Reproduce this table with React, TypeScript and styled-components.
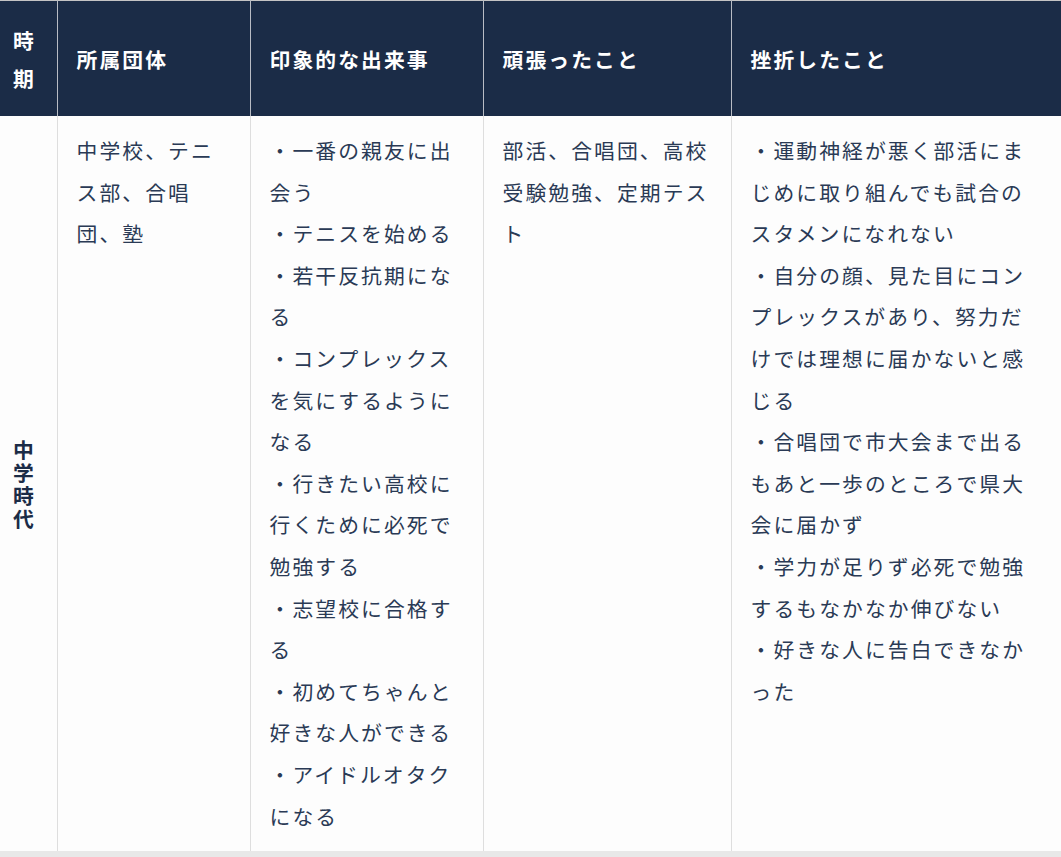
import styled, { createGlobalStyle } from "styled-components";

const GlobalStyle = createGlobalStyle`
  html, body {
    margin: 0;
    padding: 0;
    background: #e8e8e8;
  }
  body {
    font-family: "Noto Sans CJK JP", "Noto Sans", sans-serif;
  }
`;

const Table = styled.table`
  width: 1061px;
  table-layout: fixed;
  border-collapse: collapse;
  background: #fdfdfd;
  border-top: 1px solid #c4c4c4;
  font-size: 20.8px;
  letter-spacing: 2.08px;
  color: #2a3a55;
`;

const HeadCell = styled.th<{ $narrow?: boolean }>`
  background: #1b2c47;
  color: #ffffff;
  font-weight: 700;
  text-align: left;
  vertical-align: middle;
  line-height: 38px;
  padding: ${(p) => (p.$narrow ? "20px 12px 19px 13px" : "20px 19px 19px 19px")};
  border-right: 1px solid #b8bcc4;

  &:last-child {
    border-right: none;
  }
`;

const Cell = styled.td`
  vertical-align: top;
  line-height: 41.6px;
  padding: 14px 19px 14px 19px;
  border-right: 1px solid #dedede;
  word-break: normal;
  line-break: strict;

  &:last-child {
    border-right: none;
  }
`;

const PeriodCell = styled.td`
  vertical-align: middle;
  font-weight: 700;
  color: #1b2c47;
  line-height: 23px;
  padding: 14px 12px 14px 13px;
  border-right: 1px solid #dedede;
`;

type Row = {
  period: string;
  group: string;
  events: string[];
  effort: string;
  setbacks: string[];
};

const rows: Row[] = [
  {
    period: "中学時代",
    group: "中学校、テニス部、合唱団、塾",
    events: [
      "・一番の親友に出会う",
      "・テニスを始める",
      "・若干反抗期になる",
      "・コンプレックスを気にするようになる",
      "・行きたい高校に行くために必死で勉強する",
      "・志望校に合格する",
      "・初めてちゃんと好きな人ができる",
      "・アイドルオタクになる",
    ],
    effort: "部活、合唱団、高校受験勉強、定期テスト",
    setbacks: [
      "・運動神経が悪く部活にまじめに取り組んでも試合のスタメンになれない",
      "・自分の顔、見た目にコンプレックスがあり、努力だけでは理想に届かないと感じる",
      "・合唱団で市大会まで出るもあと一歩のところで県大会に届かず",
      "・学力が足りず必死で勉強するもなかなか伸びない",
      "・好きな人に告白できなかった",
    ],
  },
];

function Lines({ items }: { items: string[] }) {
  return (
    <>
      {items.map((t, i) => (
        <span key={i}>
          {t}
          {i < items.length - 1 && <br />}
        </span>
      ))}
    </>
  );
}

export default function App() {
  return (
    <>
      <GlobalStyle />
      <Table>
        <colgroup>
          <col style={{ width: 57 }} />
          <col style={{ width: 193 }} />
          <col style={{ width: 233 }} />
          <col style={{ width: 248 }} />
          <col style={{ width: 330 }} />
        </colgroup>
        <thead>
          <tr>
            <HeadCell $narrow>時期</HeadCell>
            <HeadCell>所属団体</HeadCell>
            <HeadCell>印象的な出来事</HeadCell>
            <HeadCell>頑張ったこと</HeadCell>
            <HeadCell>挫折したこと</HeadCell>
          </tr>
        </thead>
        <tbody>
          {rows.map((r) => (
            <tr key={r.period}>
              <PeriodCell>{r.period}</PeriodCell>
              <Cell>{r.group}</Cell>
              <Cell>
                <Lines items={r.events} />
              </Cell>
              <Cell>{r.effort}</Cell>
              <Cell>
                <Lines items={r.setbacks} />
              </Cell>
            </tr>
          ))}
        </tbody>
      </Table>
    </>
  );
}
